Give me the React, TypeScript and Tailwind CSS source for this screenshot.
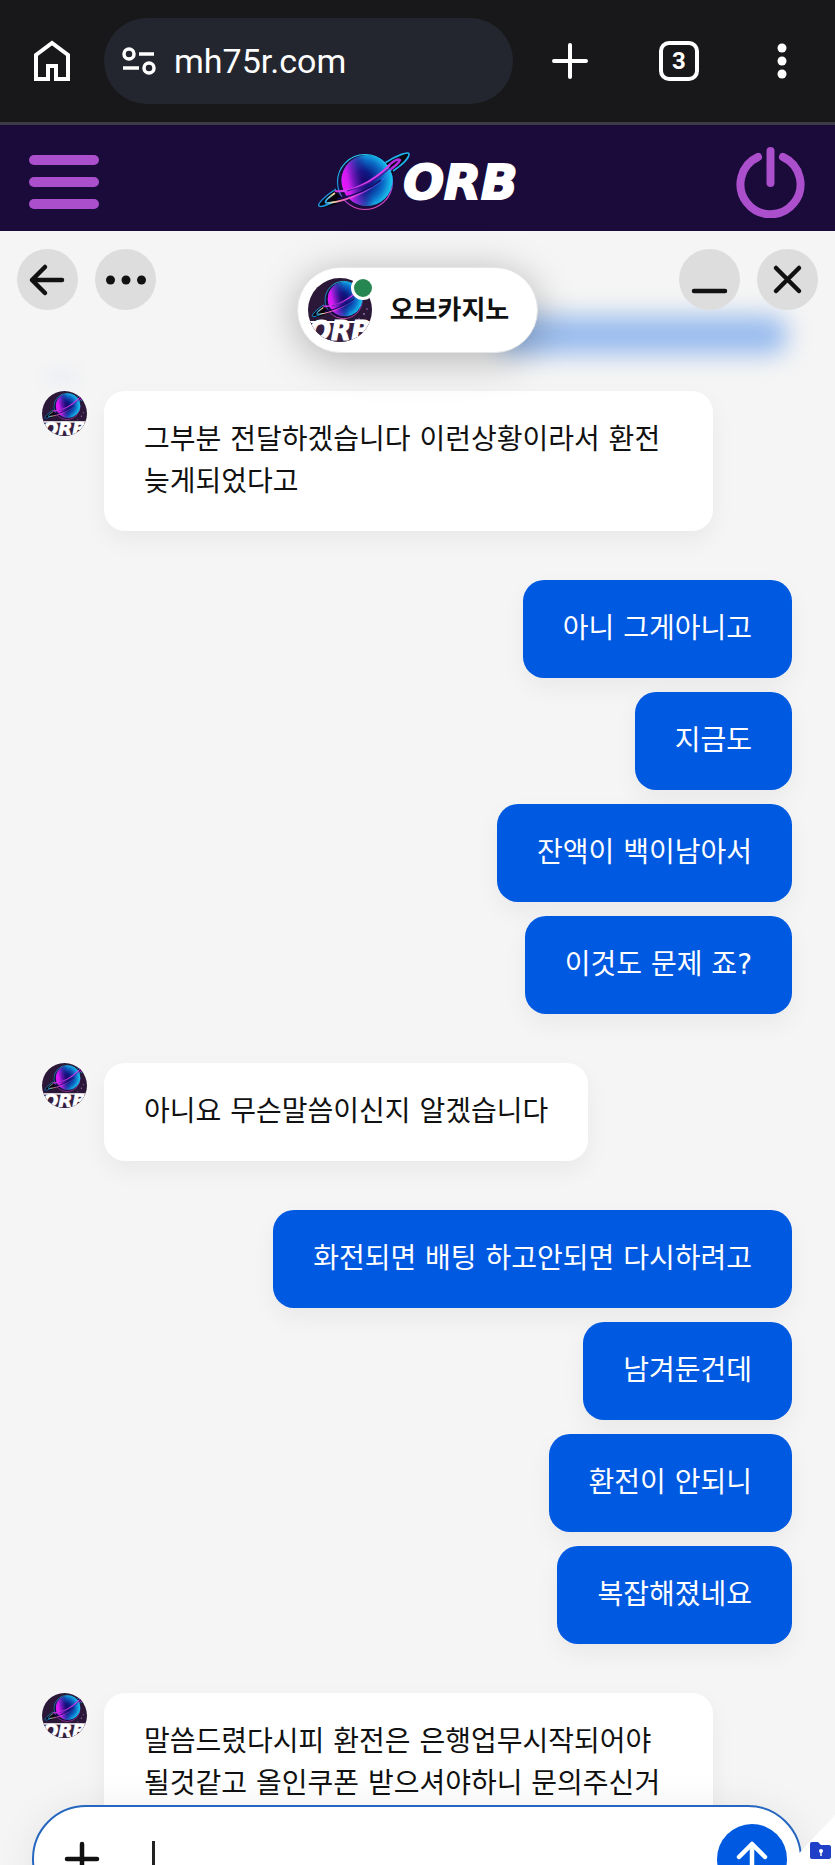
import { useId } from 'react';
import type { ReactNode } from 'react';

type Group = { from: 'agent' | 'user'; messages: string[] };

const groups: Group[] = [
    { from: 'agent', messages: ['그부분 전달하겠습니다 이런상황이라서 환전 늦게되었다고'] },
    { from: 'user', messages: ['아니 그게아니고', '지금도', '잔액이 백이남아서', '이것도 문제 죠?'] },
    { from: 'agent', messages: ['아니요 무슨말씀이신지 알겠습니다'] },
    { from: 'user', messages: ['화전되면 배팅 하고안되면 다시하려고', '남겨둔건데', '환전이 안되니', '복잡해졌네요'] },
    { from: 'agent', messages: ['말씀드렸다시피 환전은 은행업무시작되어야 될것같고 올인쿠폰 받으셔야하니 문의주신거'] },
];

function Planet({ className }: { className?: string }) {
    const id = useId();
    return (
        <svg viewBox="0 0 94 62" className={className} aria-hidden="true">
            <defs>
                <radialGradient id={`${id}body`} cx="0.42" cy="0.5" r="0.62">
                    <stop offset="0" stopColor="#0d0660" />
                    <stop offset="0.3" stopColor="#0b1c86" />
                    <stop offset="0.65" stopColor="#0b6cc8" />
                    <stop offset="1" stopColor="#1fe0fb" />
                </radialGradient>
                <linearGradient id={`${id}glow`} x1="0" y1="0.6" x2="1" y2="0.4">
                    <stop offset="0" stopColor="#f015fa" />
                    <stop offset="0.14" stopColor="#cf1af2" />
                    <stop offset="0.4" stopColor="#3a0c90" stopOpacity="0.5" />
                    <stop offset="0.55" stopColor="#1b0c74" stopOpacity="0" />
                </linearGradient>
                <linearGradient id={`${id}rim`} x1="0.3" y1="0" x2="0.5" y2="1">
                    <stop offset="0" stopColor="#22d3f5" />
                    <stop offset="0.55" stopColor="#1589d8" />
                    <stop offset="0.8" stopColor="#c13bd0" />
                    <stop offset="1" stopColor="#e04bb8" />
                </linearGradient>
                <linearGradient id={`${id}ring`} x1="0" y1="0" x2="1" y2="0">
                    <stop offset="0" stopColor="#1ea7f0" />
                    <stop offset="0.12" stopColor="#f3dfa0" />
                    <stop offset="0.25" stopColor="#f06fb5" />
                    <stop offset="0.5" stopColor="#d43be8" />
                    <stop offset="0.8" stopColor="#2a52d8" />
                    <stop offset="1" stopColor="#22a8f5" />
                </linearGradient>
            </defs>
            <path d="M66 13 C78 4 92 -1 92 3 C92 9 83 18 68 27 Z" fill="#07040f" />
            <path d="M68 12 C80 4 92 0 92 3 C92 7 85 14 76 20" fill="none" stroke="#1fb4ee" strokeWidth="1.6" />
            <path d="M69 17 C75 11 81 7 83 9 C82 12 77 16 71 20" fill="none" stroke="#b12be0" strokeWidth="2.4" />
            <circle cx="48" cy="31" r="28" fill="#1a0b3c" />
            <circle cx="48" cy="31" r="27.500" fill="none" stroke={`url(#${id}rim)`} strokeWidth="1.2" />
            <circle cx="50" cy="29.500" r="25.500" fill={`url(#${id}body)`} />
            <circle cx="50" cy="29.500" r="25.500" fill={`url(#${id}glow)`} />
            <path d="M20 37 C8 45 -1 53 2 56 C8 59 22 52 32 47 C26 47 20 44 19 41 Z" fill="#07040f" />
            <path d="M19 38 C8 45 0 53 2 55 C4 57 10 54 16 51" fill="none" stroke="#1e9be8" strokeWidth="1.4" />
            <path d="M18 42 C11 47 7 50 9 52 C22 52 44 44 60 33 C67 28 72 23 74 19" fill="none" stroke={`url(#${id}ring)`} strokeWidth="1.6" />
            <path d="M20 48 C36 45 52 39 64 29" fill="none" stroke="#180a5c" strokeWidth="1.6" />
            <path d="M18 40 C34 42 54 32 73 14" fill="none" stroke="#d43bea" strokeWidth="2.2" />
            <path d="M30 40 C44 37 60 29 73 17" fill="none" stroke="#4a1298" strokeWidth="1.2" />
        </svg>
    );
}

function Avatar({ className }: { className: string }) {
    return (
        <span className={`relative block shrink-0 overflow-hidden rounded-full bg-[#2b1838] ${className}`}>
            <svg viewBox="0 0 64 64" className="block size-full" role="img" aria-label="ORB">
                <circle cx="56" cy="36" r="1" fill="#8b6fa8" />
                <circle cx="51" cy="41" r="1" fill="#6d4f8c" />
                <circle cx="59" cy="31" r="1" fill="#6d4f8c" />
                <svg x="3" y="1" width="64" height="42" viewBox="0 0 94 62">
                    <Planet />
                </svg>
                <rect y="44" width="64" height="20" fill="#37203f" />
                <rect y="43" width="64" height="2" fill="#ffffff" />
                <text
                    x="32"
                    y="62"
                    textAnchor="middle"
                    fontFamily="DejaVu Sans, sans-serif"
                    fontSize="26"
                    fontWeight="700"
                    fontStyle="italic"
                    fill="#ffffff"
                    stroke="#ffffff"
                    strokeWidth="1"
                >
                    ORB
                </text>
            </svg>
        </span>
    );
}

function BrowserBar() {
    return (
        <div className="flex h-[125px] shrink-0 items-center border-b-3 border-[#3d3b45] bg-[#18181a] pr-[29px] pl-[30px] text-white">
            <button type="button" aria-label="홈" className="shrink-0">
                <svg viewBox="0 0 44 44" className="size-11" fill="none" stroke="currentColor" strokeWidth="4">
                    <path d="M6 40 V16 L22 4 L38 16 V40 H26 V27 H18 V40 Z" />
                </svg>
            </button>
            <div className="ml-[30px] flex h-[86px] min-w-0 flex-1 items-center gap-[18px] rounded-full bg-[#24262f] pl-[18px]">
                <svg viewBox="0 0 34 30" className="h-[30px] w-[34px] shrink-0" fill="none" stroke="currentColor" strokeWidth="3.500">
                    <circle cx="7" cy="8" r="5" />
                    <path d="M17 8 H32" />
                    <circle cx="27" cy="22" r="5" />
                    <path d="M1 22 H17" />
                </svg>
                <input
                    aria-label="주소"
                    defaultValue="mh75r.com"
                    className="h-12 w-full min-w-0 bg-transparent font-['Roboto',sans-serif] text-[34px] outline-none"
                />
            </div>
            <div className="ml-[35px] flex shrink-0 items-center">
                <button type="button" aria-label="새 탭">
                    <svg viewBox="0 0 44 44" className="size-11" stroke="currentColor" strokeWidth="4" strokeLinecap="round">
                        <path d="M22 6 V38 M6 22 H38" />
                    </svg>
                </button>
                <button
                    type="button"
                    aria-label="탭 3개"
                    className="ml-[67px] flex size-10 items-center justify-center rounded-[10px] border-4 border-white font-['Roboto',sans-serif] text-[24px] leading-none font-bold"
                >
                    3
                </button>
                <button type="button" aria-label="메뉴 더보기" className="ml-[59px]">
                    <svg viewBox="0 0 48 48" className="size-12" fill="currentColor">
                        <circle cx="24" cy="11" r="4.500" />
                        <circle cx="24" cy="24" r="4.500" />
                        <circle cx="24" cy="37" r="4.500" />
                    </svg>
                </button>
            </div>
        </div>
    );
}

function SiteHeader() {
    return (
        <header className="grid h-[106px] shrink-0 grid-cols-[1fr_auto_1fr] items-center bg-[#1a0b3b] px-[29px] pt-2 text-[#ab4fcd]">
            <button type="button" aria-label="메뉴" className="flex w-[70px] flex-col gap-3">
                <span className="h-[10px] rounded-md bg-current" />
                <span className="h-[10px] rounded-md bg-current" />
                <span className="h-[10px] rounded-md bg-current" />
            </button>
            <a href="#" aria-label="ORB" className="flex items-center">
                <Planet className="h-[62px] w-[94px]" />
                <span className="-ml-2 font-['DejaVu_Sans',sans-serif] text-[48px] leading-none font-bold text-white italic [-webkit-text-stroke:2px_white]">
                    ORB
                </span>
            </a>
            <button type="button" aria-label="로그아웃" className="justify-self-end">
                <svg viewBox="0 0 72 72" className="size-[72px]" fill="none" stroke="currentColor" strokeWidth="8" strokeLinecap="round">
                    <path d="M24 11 A30 30 0 1 0 49 11" />
                    <path d="M36.500 5 V37" />
                </svg>
            </button>
        </header>
    );
}

function RoundButton({ label, children }: { label: string; children: ReactNode }) {
    return (
        <button type="button" aria-label={label} className="flex size-[61px] items-center justify-center rounded-full bg-[#dddddd]">
            <svg viewBox="0 0 44 44" className="size-11" fill="none" stroke="currentColor" strokeWidth="4.500" strokeLinecap="round" strokeLinejoin="round">
                {children}
            </svg>
        </button>
    );
}

function ChatHeader() {
    return (
        <div className="relative grid h-40 grid-cols-[1fr_auto_1fr] items-start px-[17px] pt-[18px]">
            {/* messages scrolled under the frosted header */}
            <div className="absolute top-[85px] right-[48px] h-[38px] w-[290px] rounded-2xl bg-[#96baee] blur-[12px]" />
            <div className="absolute top-[142px] left-[46px] h-2 w-8 rounded-full bg-[#e4eaf6] blur-[8px]" />
            <div className="relative flex gap-[17px]">
                <RoundButton label="뒤로">
                    <path d="M36 22 H6 M19 9 L6 22 L19 35" />
                </RoundButton>
                <RoundButton label="옵션">
                    <g fill="currentColor" stroke="none">
                        <circle cx="6.500" cy="22" r="4.500" />
                        <circle cx="22" cy="22" r="4.500" />
                        <circle cx="37.500" cy="22" r="4.500" />
                    </g>
                </RoundButton>
            </div>
            <div className="relative mt-[18px] flex h-[86px] items-center gap-[18px] rounded-full border border-[#e6e6e6] bg-white pr-7 pl-[10px] shadow-[0_6px_40px_rgba(0,0,0,0.28)]">
                <div className="relative">
                    <Avatar className="size-16" />
                    <span className="absolute -top-[2px] -right-[3px] size-6 rounded-full border-3 border-white bg-[#268750]" />
                </div>
                <h1 className="text-[26px] leading-[36px] font-bold">오브카지노</h1>
            </div>
            <div className="relative flex gap-[17px] justify-self-end">
                <RoundButton label="최소화">
                    <path d="M6 33 H37" />
                </RoundButton>
                <RoundButton label="닫기">
                    <path d="M10 10 L33 33 M33 10 L10 33" />
                </RoundButton>
            </div>
        </div>
    );
}

function MessageGroup({ group }: { group: Group }) {
    const isAgent = group.from === 'agent';
    return (
        <li className="flex gap-[17px]">
            {isAgent && <Avatar className="size-[45px]" />}
            <div className={isAgent ? 'flex min-w-0 flex-col items-start gap-[14px]' : 'flex flex-1 flex-col items-end gap-[14px]'}>
                {group.messages.map((message) => (
                    <p
                        key={message}
                        className={`max-w-[609px] rounded-[21px] px-10 py-7 font-['DejaVu_Sans','Noto_Sans_CJK_KR',sans-serif] text-[28px] leading-[42px] break-keep shadow-[0_10px_24px_rgba(0,0,0,0.05)] ${
                            isAgent ? 'bg-white text-[#111111]' : 'bg-[#0059e1] text-white'
                        }`}
                    >
                        {message}
                    </p>
                ))}
            </div>
        </li>
    );
}

function Composer() {
    return (
        <form
            onSubmit={(e) => e.preventDefault()}
            className="absolute right-[33px] -bottom-12 left-8 flex h-[108px] items-center rounded-full border-2 border-[#2466c0] bg-white pr-[13px] pl-[26px] shadow-[0_4px_40px_rgba(0,0,0,0.08)]"
        >
            <button type="button" aria-label="첨부">
                <svg viewBox="0 0 44 44" className="size-11" stroke="currentColor" strokeWidth="4.500" strokeLinecap="round">
                    <path d="M22 7 V37 M7 22 H37" />
                </svg>
            </button>
            <span className="ml-12 h-9 w-[3px] shrink-0 bg-[#222222]" />
            <input aria-label="메시지" className="h-full min-w-0 flex-1 bg-transparent text-[28px] outline-none" />
            <button type="submit" aria-label="보내기" className="flex size-[70px] shrink-0 items-center justify-center rounded-full bg-[#0059e1] text-white">
                <svg viewBox="0 0 44 44" className="size-11" fill="none" stroke="currentColor" strokeWidth="4.500" strokeLinecap="round" strokeLinejoin="round">
                    <path d="M22 38 V7 M9 20 L22 7 L35 20" />
                </svg>
            </button>
        </form>
    );
}

export default function App() {
    return (
        <div className="flex h-screen flex-col overflow-hidden bg-[#f5f5f5] font-['Inter','Noto_Sans_CJK_KR',sans-serif] text-[#111111]">
            <BrowserBar />
            <SiteHeader />
            <main className="relative min-h-0 flex-1 overflow-hidden">
                <ChatHeader />
                <ul className="flex flex-col gap-[49px] pr-[43px] pl-[42px]">
                    {groups.map((group) => (
                        <MessageGroup key={group.messages[0]} group={group} />
                    ))}
                </ul>
                <Composer />
                <button type="button" aria-label="보안 폴더" className="absolute right-0 bottom-0">
                    <svg viewBox="0 0 47 50" className="h-[50px] w-[47px]">
                        <path d="M47 0 L0 50 H47 Z" fill="#ffffff" />
                        <path d="M22 29 Q22 27 24 27 H30 L33 30 H41 Q43 30 43 32 V42 Q43 44 41 44 H24 Q22 44 22 42 Z" fill="#2140c8" />
                        <circle cx="33" cy="36" r="2" fill="#ffffff" />
                        <path d="M33 36 V41" stroke="#ffffff" strokeWidth="1.500" />
                    </svg>
                </button>
            </main>
        </div>
    );
}
